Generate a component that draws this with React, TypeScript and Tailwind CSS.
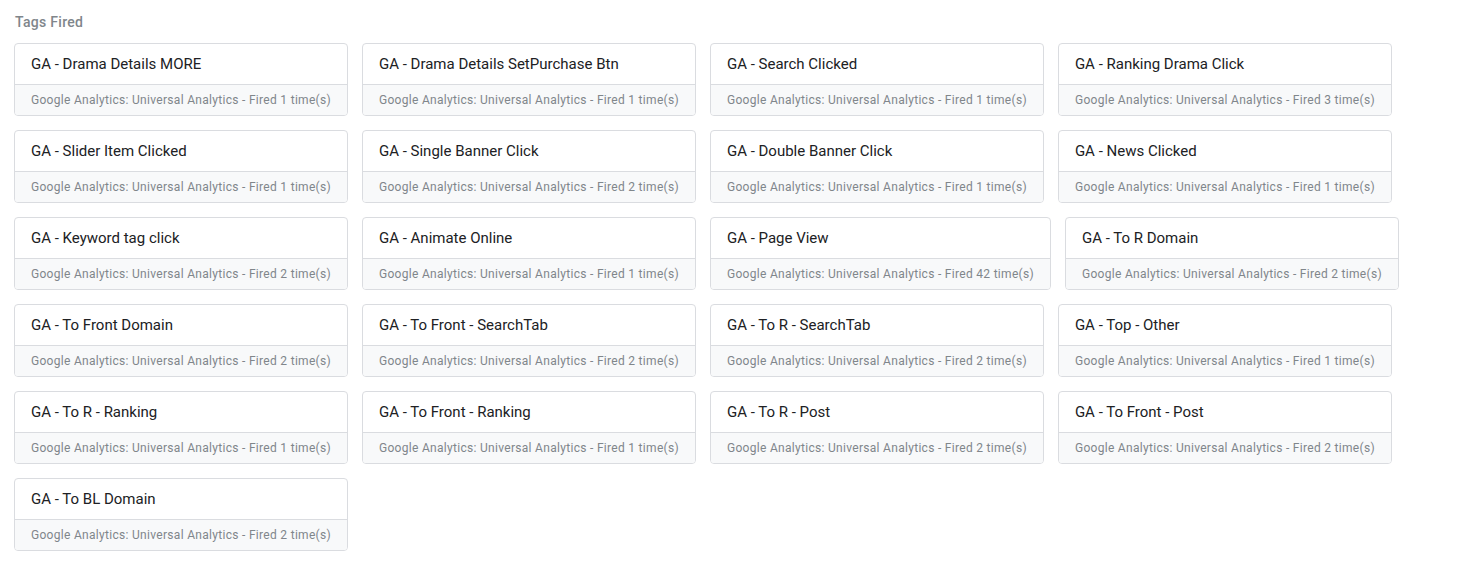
import React from "react";

const tags: [string, number][] = [
  ["GA - Drama Details MORE", 1],
  ["GA - Drama Details SetPurchase Btn", 1],
  ["GA - Search Clicked", 1],
  ["GA - Ranking Drama Click", 3],
  ["GA - Slider Item Clicked", 1],
  ["GA - Single Banner Click", 2],
  ["GA - Double Banner Click", 1],
  ["GA - News Clicked", 1],
  ["GA - Keyword tag click", 2],
  ["GA - Animate Online", 1],
  ["GA - Page View", 42],
  ["GA - To R Domain", 2],
  ["GA - To Front Domain", 2],
  ["GA - To Front - SearchTab", 2],
  ["GA - To R - SearchTab", 2],
  ["GA - Top - Other", 1],
  ["GA - To R - Ranking", 1],
  ["GA - To Front - Ranking", 1],
  ["GA - To R - Post", 2],
  ["GA - To Front - Post", 2],
  ["GA - To BL Domain", 2],
];

export default function App() {
  return (
    <div
      className="w-[1478px] h-[570px] bg-white pt-[12px] pl-[14px] pr-[60px]"
      style={{ fontFamily: "Roboto, 'Liberation Sans', sans-serif" }}
    >
      <div className="ml-px text-[14px] leading-[20px] font-medium tracking-[0.3px] text-[#80868b]">Tags Fired</div>
      <div className="mt-[11px] flex flex-wrap gap-[14px]">
        {tags.map(([name, n]) => (
          <div
            key={name}
            className="flex flex-col border border-[#dadce0] rounded-[4px] overflow-hidden bg-white"
          >
            <div className="h-[40px] flex items-center px-4 text-[15px] text-[#202124] whitespace-nowrap">
              {name}
            </div>
            <div className="h-[31px] flex items-center px-4 pb-px border-t border-[#dadce0] bg-[#f8f9fa] text-[12px] tracking-[0.3px] text-[#80868b] whitespace-nowrap">
              Google Analytics: Universal Analytics - Fired {n} time(s)
            </div>
          </div>
        ))}
      </div>
    </div>
  );
}
